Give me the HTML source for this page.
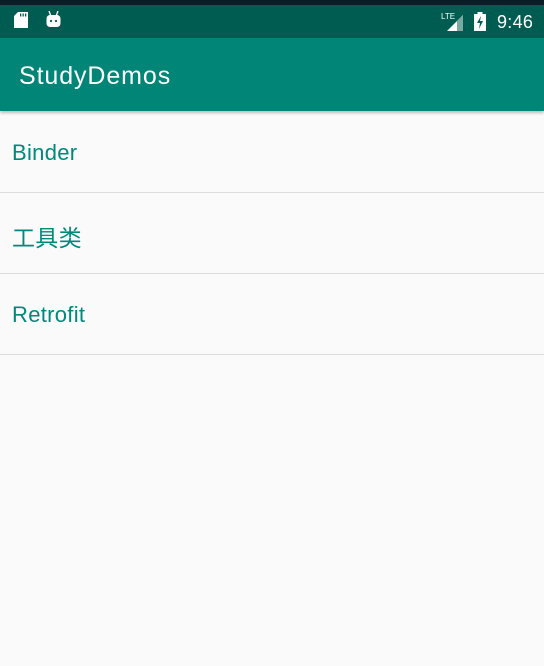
<!DOCTYPE html>
<html><head><meta charset="utf-8"><style>
body{margin:0;width:544px;height:666px;background:#fafafa;font-family:"Liberation Sans","Noto Sans CJK SC",sans-serif;overflow:hidden;position:relative}
.top{position:absolute;left:0;top:0;width:544px;height:5px;background:#0b1d26}
.sb{position:absolute;left:0;top:5px;width:544px;height:33px;background:#005b50}
.ab{position:absolute;left:0;top:38px;width:544px;height:73px;background:#008577;box-shadow:0 2px 3px rgba(0,0,0,.25)}
.ab span{position:absolute;left:19px;top:24px;color:#fff;font-size:25px;letter-spacing:0.9px}
.item{position:absolute;left:0;width:544px;height:81px;border-bottom:1px solid #dcdcdc}
.item span{position:absolute;left:12px;top:29px;color:#00897b;font-size:22px;letter-spacing:0.3px}
.time{position:absolute;left:497px;top:7px;color:#fff;font-size:18px;letter-spacing:0.3px}
</style></head><body>
<div class="top"></div>
<div class="sb">
<svg style="position:absolute;left:14px;top:7px" width="14" height="16"><path d="M4 0H14V16H0V4Z" fill="#fff"/><rect x="6" y="1.5" width="1.3" height="3" fill="#005b50"/><rect x="8.5" y="1.5" width="1.3" height="3" fill="#005b50"/><rect x="11" y="1.5" width="1.3" height="3" fill="#005b50"/></svg>
<svg style="position:absolute;left:46px;top:6px" width="15" height="16"><path d="M3 0L4.5 4M12 0L10.5 4" stroke="#fff" stroke-width="1.3"/><rect x="0.5" y="4" width="14" height="12" rx="3.5" fill="#fff"/><circle cx="5" cy="10" r="1.1" fill="#005b50"/><circle cx="10" cy="10" r="1.1" fill="#005b50"/></svg>
<svg style="position:absolute;left:441px;top:6px" width="24" height="20"><text x="0" y="8" font-size="8" fill="#fff" font-family="Liberation Sans">LTE</text><path d="M22 4V20H6Z" fill="#fff"/><path d="M22 4V20H16V10Z" fill="#7aa9a2"/></svg>
<svg style="position:absolute;left:474px;top:7px" width="12" height="20"><rect x="3.5" y="0" width="5" height="2" fill="#fff"/><rect x="0" y="2" width="12" height="17" fill="#fff"/><path d="M7 4L3 11H6L5 17L9 9H6Z" fill="#005b50"/></svg>
<div class="time">9:46</div>
</div>
<div class="ab"><span>StudyDemos</span></div>
<div class="item" style="top:111px"><span>Binder</span></div>
<div class="item" style="top:192px"><span style="top:27px;font-size:23px">工具类</span></div>
<div class="item" style="top:273px"><span>Retrofit</span></div>
</body></html>
